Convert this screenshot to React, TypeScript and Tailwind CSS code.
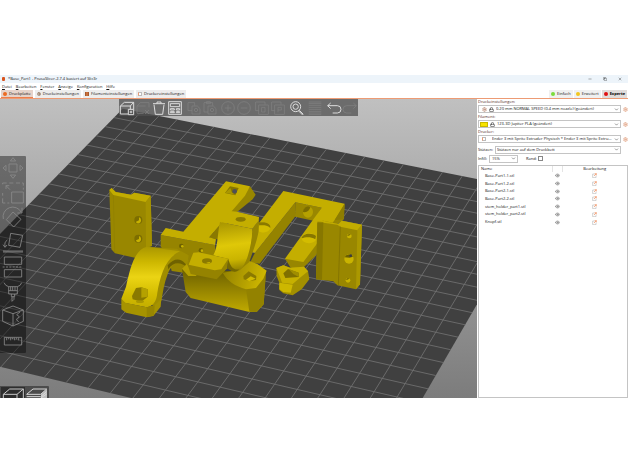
import React, { useState } from 'react';
import { ChevronDown, Copy, Eye, Lock, Minus, Settings, X } from 'lucide-react';

const menuItems = ['Datei', 'Bearbeiten', 'Fenster', 'Anzeige', 'Konfiguration', 'Hilfe'];

const objects = [
  'Base-Part1-1.stl',
  'Base-Part1-2.stl',
  'Base-Part2-1.stl',
  'Base-Part2-2.stl',
  'stem_holder_part1.stl',
  'stem_holder_part2.stl',
  'Knopf.stl'
];

const modes = [
  { name: 'Einfach', dot: 'bg-[#7bdc3c]' },
  { name: 'Erweitert', dot: 'bg-[#f2c61d]' },
  { name: 'Experte', dot: 'bg-[#e01010]' }
];

// Projects the unit square onto the print bed as the camera sees it
const bed = { tl: [368, 38], tr: [1626, 288], br: [1162, 1089], bl: [-316, 737] };
const CELLS = 22;

const project = (u: number, v: number) => {
  const { tl, tr, br, bl } = bed;
  const dx1 = tr[0] - br[0];
  const dx2 = bl[0] - br[0];
  const dx3 = tl[0] - tr[0] + br[0] - bl[0];
  const dy1 = tr[1] - br[1];
  const dy2 = bl[1] - br[1];
  const dy3 = tl[1] - tr[1] + br[1] - bl[1];
  const det = dx1 * dy2 - dx2 * dy1;
  const g = (dx3 * dy2 - dx2 * dy3) / det;
  const h = (dx1 * dy3 - dx3 * dy1) / det;
  const w = g * u + h * v + 1;
  const x = ((tr[0] - tl[0] + g * tr[0]) * u + (bl[0] - tl[0] + h * bl[0]) * v + tl[0]) / w;
  const y = ((tr[1] - tl[1] + g * tr[1]) * u + (bl[1] - tl[1] + h * bl[1]) * v + tl[1]) / w;
  return `${x.toFixed(1)} ${y.toFixed(1)}`;
};

const gridPath = Array.from({ length: CELLS - 1 }, (_, i) => {
  const t = (i + 1) / CELLS;
  return `M${project(t, 0)}L${project(t, 1)}M${project(0, t)}L${project(1, t)}`;
}).join('');

const Scene = () => (
  <svg viewBox="0 9 1431 897" className="block w-full" role="img" aria-label="Druckbett">
    <defs>
      <linearGradient id="sky" x1="0" y1="0" x2="0" y2="1">
        <stop offset="0" stopColor="#c0c0c0" />
        <stop offset="1" stopColor="#7c7c7c" />
      </linearGradient>
      <linearGradient id="arch" x1="0" y1="0" x2="0" y2="1">
        <stop offset="0" stopColor="#aa9700" />
        <stop offset="0.25" stopColor="#cdb700" />
        <stop offset="0.5" stopColor="#ebd414" />
        <stop offset="0.8" stopColor="#d2bb00" />
        <stop offset="1" stopColor="#c4ae00" />
      </linearGradient>
      <linearGradient id="cradle" x1="0" y1="0" x2="0.1" y2="1">
        <stop offset="0" stopColor="#a59200" />
        <stop offset="0.5" stopColor="#dfc808" />
        <stop offset="0.8" stopColor="#cab400" />
        <stop offset="1" stopColor="#968500" />
      </linearGradient>
      <linearGradient id="base" x1="0" y1="0" x2="0" y2="1">
        <stop offset="0.1" stopColor="#6d6100" />
        <stop offset="0.6" stopColor="#9c8a00" />
        <stop offset="1" stopColor="#c0aa00" />
      </linearGradient>
      <linearGradient id="shelf" x1="0" y1="0" x2="1" y2="0.2">
        <stop offset="0" stopColor="#8f7e00" />
        <stop offset="1" stopColor="#cdb600" />
      </linearGradient>
    </defs>
    <rect y="9" width="1431" height="897" fill="url(#sky)" />
    <path d={`M${project(0, 0)}L${project(1, 0)}L${project(1, 1)}L${project(0, 1)}Z`} fill="#404040" />
    <path d={gridPath} stroke="#707070" strokeWidth="2.6" fill="none" />

    {/* left plate */}
    <path d="M328 282L335 276L347 288L393 296L403 290L452 299L456 450L438 456L408 486L345 472L334 460Z" fill="#998700" />
    <path d="M328 282L335 276L347 288L393 296L403 290L452 299L437 318L340 297Z" fill="#c2ac00" />
    <path d="M437 318L452 299L456 450L438 456Z" fill="#a59200" />
    <path d="M340 297L344 468" stroke="#8f7e00" strokeWidth="2" />
    <g fill="#7d6e00">
      <circle cx="415" cy="372" r="12" />
      <circle cx="415" cy="428" r="12" />
    </g>
    <g fill="#c7b100">
      <path d="M417 364a10 10 0 0 1 1 18q-10 2-10-5l9-4z" />
      <path d="M417 420a10 10 0 0 1 1 18q-10 2-10-5l9-4z" />
    </g>

    {/* bracket with the long arm */}
    <path d="M750 271L767 296L758 310L690 365L655 430L628 426Z" fill="#988600" />
    <path d="M482 417L645 447L650 500L550 520L482 452Z" fill="#968400" />
    <path d="M678 256L750 271L735 299L628 424L648 430L645 447L482 417L497 396L550 407Z" fill="#c4ae00" />
    <path d="M628 424L662 385L660 432Z" fill="#8a7900" />
    <path d="M690 271L716 276L706 298L675 291Z" fill="#857500" />
    <circle cx="704" cy="286" r="7" fill="#4f4f55" />
    <path d="M691 276L696 290L706 296L676 290Z" fill="#aa9700" />
    <g fill="#6f6200">
      <circle cx="544" cy="450" r="7" />
      <circle cx="603" cy="463" r="7" />
    </g>
    <g fill="#c7b100">
      <circle cx="547" cy="451" r="4" />
      <circle cx="606" cy="464" r="4" />
    </g>

    {/* U frame */}
    <path d="M886 319L885 362L779 503L750 500L765 470Z" fill="#958300" />
    <path d="M886 319L965 335L940 374L885 362Z" fill="#998700" />
    <path d="M1034 323L1030 372L990 400L946 480L905 520L872 515L855 488Z" fill="#988600" />
    <path d="M850 285L1034 323L1004 372L910 498L855 488L965 335L886 319L765 470L745 466L740 430Z" fill="#c4ae00" />
    <path d="M1034 323L1032 370L1004 372Z" fill="#8d7d00" />
    <ellipse cx="924" cy="348" rx="15" ry="17" fill="#b5a100" />
    <path d="M909 348a15 17 0 0 1 22-15q-4 18-22 15z" fill="#7c6d00" />
    <path d="M772 404L782 379C800 376 813 385 811 396C808 409 790 414 772 404Z" fill="#d3bc00" />
    <path d="M776 380C800 376 813 385 811 396C800 386 790 388 777 388Z" fill="#8a7900" />
    <ellipse cx="927" cy="427" rx="22" ry="15" fill="#d3bc00" />
    <path d="M905 427C905 412 936 408 948 420L946 430C930 420 915 424 905 427Z" fill="#867600" />

    {/* right plate */}
    <path d="M952 377L970 374L1015 384L1025 374L1086 386L1080 565L1068 580L1012 568L1000 556L948 550Z" fill="#998700" />
    <path d="M952 377L970 374L1015 384L1025 374L1086 386L1072 403L1021 392L1012 386L970 380Z" fill="#c2ac00" />
    <path d="M1072 403L1086 386L1080 565L1068 580Z" fill="#ab9800" />
    <path d="M952 380L970 379L966 551L948 550Z" fill="#877700" />
    <path d="M1021 392L1015 568" stroke="#857500" strokeWidth="3" />
    <circle cx="1048" cy="420" r="7" fill="#c9b300" />
    <circle cx="1044" cy="553" r="7" fill="#c9b300" />
    <circle cx="1047" cy="489" r="14" fill="#c9b300" />
    <path d="M1034 484a14 14 0 0 1 25-2l-10 3z" fill="#6b5f00" />
    <path d="M1042 420a7 7 0 0 1 11-4zM1038 552a7 7 0 0 1 11-4z" fill="#6b5f00" />
    <circle cx="1052" cy="479" r="4" fill="#3c3c40" />

    {/* half ring on the left */}
    <path d="M500 462L560 474L570 500L552 530L515 525Z" fill="#988600" />
    <path d="M440 452L530 458L566 478L562 505L545 498C528 496 510 512 503 535C492 562 489 590 484 615L462 632L455 625C468 590 474 520 505 484Z" fill="#9f8d00" />
    <path d="M505 520C520 495 545 498 562 515L556 503C540 485 522 486 503 508Z" fill="#6f6200" />
    <path d="M364 608L378 572C390 520 402 462 440 452L540 466C494 486 480 545 472 590C470 612 462 630 440 634L372 620Z" fill="url(#arch)" />
    <path d="M364 608L376 620L440 634L464 628L484 608L482 632L460 660L440 664L378 650L364 640Z" fill="#a69300" />
    <path d="M440 634L464 628L462 658L440 664Z" fill="#988600" />
    <path d="M396 600L408 576L424 574L443 580L443 602L424 617L398 610Z" fill="#8a7900" />
    <path d="M424 574L443 580L443 602L424 605Z" fill="#b5a100" />
    <ellipse cx="420" cy="617" rx="12" ry="4" fill="#aa9700" />

    {/* stem holder base */}
    <path d="M546 520L560 508L668 525L798 525L791 625L770 648L745 647L572 606L557 588Z" fill="url(#base)" />
    <path d="M738 578L768 576L798 525L791 625L770 648L748 647Z" fill="#938200" />
    <path d="M546 518L560 504L590 540L565 540Z" fill="#b5a000" />
    <path d="M748 495L772 504L800 524L790 548L768 576L738 580C705 570 682 555 668 530L700 525Z" fill="url(#shelf)" />
    <path d="M730 540L746 526L769 540L768 552L748 555L731 550Z" fill="#8a7900" />
    <path d="M738 551L752 541L767 548L748 556Z" fill="#d2bb00" />
    <path d="M777 372L776 405C770 440 757 470 748 498L715 526C738 500 754 450 757 398Z" fill="#968400" />
    <path d="M660 378L757 398C755 460 735 527 704 528C690 524 686 510 683 490L640 478C655 450 652 410 660 378Z" fill="url(#cradle)" />
    <path d="M690 345L711 347L777 363L776 374L757 398L660 378Z" fill="#c4ae00" />
    <ellipse cx="722" cy="370" rx="15" ry="7" fill="#8a7900" />
    <path d="M580 470L596 469L685 488L682 517L650 550L572 534L563 506Z" fill="#958300" />
    <path d="M580 470L596 469L685 488L664 520L644 523L566 506Z" fill="#c4ae00" />
    <path d="M685 488L682 517L690 522C700 530 712 528 718 520C700 524 690 510 685 488Z" fill="#756800" />
    <ellipse cx="621" cy="495" rx="15" ry="8" fill="#8a7900" />
    <path d="M618 501q10-4 14-2q-4 5-14 2z" fill="#c9b300" />

    {/* knob */}
    <path d="M829 516L850 508L870 515L912 512L924 525L928 550L905 580L878 598L850 592L838 582L838 560L830 540Z" fill="#a28f00" />
    <path d="M829 516L850 508L870 515L912 512L924 526L900 545L878 564L846 560L840 543Z" fill="#c6b000" />
    <path d="M838 560L878 566L872 590L850 588L838 580Z" fill="#cdb700" />
    <path d="M850 532L864 519L896 530L896 543L856 546Z" fill="#7f7000" />
    <path d="M866 519L896 530L896 543L880 534Z" fill="#a08e00" />
  </svg>
);

// Toolbar drawings share a 48 unit box
const toolGroups = [
  [
    { label: 'Hinzufügen', on: true, d: 'M4 18L16 7H44L34 18ZM4 18V42H28M34 18V28M44 7V28M28 28H44V44H28ZM32 36H40M36 32V40' },
    { label: 'Entfernen', on: false, d: 'M6 18L16 8H42V22M6 18H32M6 18V40H26M30 30L42 42M42 30L30 42' },
    { label: 'Alle entfernen', on: true, d: 'M6 11H42M18 11V6H30V11M9 14L13 43H35L39 14' },
    { label: 'Anordnen', on: true, d: 'M5 5H43V43H5ZM10 11H38V20H10ZM10 26H22V30H10ZM10 35H22V38H10ZM28 26H38V30H28ZM28 35H38V38H28Z' }
  ],
  [
    { label: 'Kopieren', on: false, d: 'M26 17V8H6V32H18M18 18H34L42 26V42H18ZM25 30a5 5 0 1 0 10 0a5 5 0 1 0-10 0' },
    { label: 'Einfügen', on: false, d: 'M32 17V8H6V36H18M13 5H25V11H13ZM18 18H34L42 26V42H18ZM25 30a5 5 0 1 0 10 0a5 5 0 1 0-10 0' }
  ],
  [
    { label: 'Kopie hinzufügen', on: false, d: 'M5 24a19 19 0 1 0 38 0a19 19 0 1 0-38 0M14 24H34M24 14V34' },
    { label: 'Kopie entfernen', on: false, d: 'M5 24a19 19 0 1 0 38 0a19 19 0 1 0-38 0M14 24H34' }
  ],
  [
    { label: 'In Objekte trennen', on: false, d: 'M14 32H5V6H33V14M14 15H43V43H14ZM23 22H33V36H23Z' },
    { label: 'In Teile trennen', on: false, d: 'M14 32H5V6H33V14M14 15H43V43H14ZM24 37V22H34V30H24' }
  ],
  [{ label: 'Suchen', on: true, d: 'M5 20a15 15 0 1 0 30 0a15 15 0 1 0-30 0M12 20a8 8 0 1 0 16 0a8 8 0 1 0-16 0M31 31L43 43M29 33L41 45' }],
  [{ label: 'Variable Schichthöhe', on: false, d: 'M5 6H43M5 11H43M5 16H43M5 22H43M5 28H43M5 34H43M5 39H43M5 43H43' }],
  [
    { label: 'Rückgängig', on: true, d: 'M14 9L5 17L14 26M5 17H34a11 11 0 0 1 0 22H20' },
    { label: 'Wiederholen', on: false, d: 'M34 9L43 17L34 26M43 17H14a11 11 0 0 0 0 22H28' }
  ]
];

const gizmos = [
  { label: 'Bewegen', d: 'M27 24H51V48H27ZM31 15L39 5L47 15ZM31 57L39 67L47 57ZM18 28L9 36L18 44ZM60 28L69 36L60 44Z' },
  { label: 'Skalieren', d: 'M35 33H70V66H35ZM8 6H20M28 6H40M48 6H60M66 6H70V14M70 20V26M8 6V10M8 36V44M8 52V66H16M22 66H28M18 14L30 26M18 24V14H28' },
  { label: 'Drehen', d: 'M39 21L63 43L41 66L19 44ZM10 42A29 29 0 0 1 64 22M66 8V24H52' },
  { label: 'Auf Fläche legen', d: 'M32 10L68 16L60 52L26 46ZM9 63H69M9 66H69M22 30C14 36 14 40 15 50M9 44L15 52L21 45' },
  { label: 'Schneiden', d: 'M13 6H65V28H13ZM13 44H65V66H13ZM8 36H14M18 36H24M28 36H34M38 36H44M48 36H54M58 36H64' },
  { label: 'Stützen aufmalen', d: 'M12 8Q16 18 26 20H52Q62 18 65 8M26 20V42H52V20M26 32H52M34 42V50H44V42M36 50V64L42 58V50M32 20V32M38 20V32M45 20V32' },
  { label: 'Naht aufmalen', d: 'M39 6L70 18V52L39 66L8 52V18ZM8 18L39 29L70 18M39 29V66M60 24L50 32L58 38L49 46L56 54' },
  { label: 'Messen', d: 'M13 25H65V48H13ZM20 26V34M26 26V31M32 26V34M38 26V31M44 26V34M50 26V31M56 26V34' }
];

const Field = ({ id, label, value, children }: { id: string; label: string; value: string; children: React.ReactNode }) => (
  <div className="h-[15px]">
    <label htmlFor={id} className="block h-[6px] text-[#4d2518]">
      {label}
    </label>
    <div className="flex items-center gap-[2px]">
      <div className="flex h-2 min-w-0 flex-1 items-center gap-[2px] border border-[#c4c4c4] bg-white pl-[3px]">
        {children}
        <select id={id} className="h-[6px] min-w-0 flex-1 appearance-none truncate bg-transparent leading-[6px]">
          <option>{value}</option>
        </select>
        <ChevronDown className="mr-px size-[5px] shrink-0" />
      </div>
      <button aria-label={`${label} bearbeiten`}>
        <Settings className="size-[5px] text-[#e5a98c]" strokeWidth={4} />
      </button>
    </div>
  </div>
);

const tabs = [
  { name: 'Druckplatte', icon: <span className="size-[4px] rounded-full bg-[#ed6b21]" /> },
  { name: 'Druckeinstellungen', icon: <Settings className="size-[4px] text-[#8a6a50]" strokeWidth={4} /> },
  { name: 'Filamenteinstellungen', icon: <span className="size-[4px] border-x border-[#a65a30] bg-[#c8703c]" /> },
  { name: 'Druckereinstellungen', icon: <span className="size-[4px] border border-[#bbb] border-l-[#ed9b74] bg-white" /> }
];

export default function App() {
  const [tab, setTab] = useState('Druckplatte');
  const [mode, setMode] = useState('Experte');
  const [brim, setBrim] = useState(false);

  return (
    <div className="min-h-screen bg-white pt-[75px] font-['Open_Sans','Noto_Sans',sans-serif] text-[4px] leading-[6px] text-[#111]">
      <header>
        <div className="flex h-2 items-center bg-[#edf4fa] pl-[2px] pr-[6px]">
          <span className="h-[4px] w-[3px] rounded-[1px] bg-[#d9541e]" />
          <h1 className="ml-[3px] flex-1">*Base_Part1 - PrusaSlicer-2.7.4 basiert auf Slic3r</h1>
          <div className="flex gap-[11px]">
            <button aria-label="Minimieren"><Minus className="size-[4px]" /></button>
            <button aria-label="Verkleinern"><Copy className="size-[4px]" /></button>
            <button aria-label="Schließen"><X className="size-[4px]" /></button>
          </div>
        </div>
        <nav className="flex h-[7px] gap-[4px] pl-[2px]">
          {menuItems.map((item) => (
            <button key={item} className="first-letter:underline">{item}</button>
          ))}
        </nav>
        <div className="flex h-[9px] items-stretch justify-between border-b border-[#ed9b74] pl-px">
          <div className="flex gap-[2px]">
            {tabs.map(({ name, icon }) => (
              <button
                key={name}
                onClick={() => setTab(name)}
                className={`flex items-center gap-[2px] px-[2px] ${tab === name ? 'border-b border-[#ed7f4c] bg-[#e6d3ca]' : 'bg-[#ededed]'}`}
              >
                {icon}
                {name}
              </button>
            ))}
          </div>
          <div className="flex gap-px pr-px">
            {modes.map(({ name, dot }) => (
              <button
                key={name}
                onClick={() => setMode(name)}
                className={`flex items-center gap-[2px] px-[2px] ${mode === name ? 'bg-[#e0dcda] font-bold text-black' : 'bg-[#f0f0f0]'}`}
              >
                <span className={`size-[4px] rounded-full ${dot}`} />
                {name}
              </button>
            ))}
          </div>
        </div>
      </header>

      <main className="grid grid-cols-[minmax(0,1fr)_151px]">
        <section className="relative overflow-hidden">
          <Scene />
          <div className="absolute left-1/4 top-0 flex h-[17px] w-1/2 items-center justify-between bg-[#505050]/75">
            {toolGroups.map((group) => (
              <div key={group[0].label} className="flex">
                {group.map(({ label, on, d }) => (
                  <button key={label} aria-label={label} className={on ? 'text-[#dcdcdc]' : 'text-[#848484]'}>
                    <svg viewBox="0 0 48 48" className="size-4" fill="none" stroke="currentColor" strokeWidth={on ? 3 : 2}>
                      <path d={d} />
                    </svg>
                  </button>
                ))}
              </div>
            ))}
          </div>
          <div className="absolute left-0 top-[57px] flex h-[197px] w-[26px] flex-col justify-between rounded-r-[1px] bg-black/40 text-[#8a8a8a]">
            {gizmos.map(({ label, d }) => (
              <button key={label} aria-label={label}>
                <svg viewBox="0 0 78 72" className="block w-full" fill="none" stroke="currentColor" strokeWidth="2.5">
                  <path d={d} />
                </svg>
              </button>
            ))}
          </div>
          <div className="absolute bottom-0 left-0 flex h-3 w-[49px] rounded-tr-[1px] bg-black/40 pl-px pt-px">
            <button aria-label="3D-Ansicht" className="bg-black/40">
              <svg viewBox="0 0 72 33" className="h-[11px] w-6" fill="none" stroke="#c8c8c8" strokeWidth="3">
                <path d="M7 22L26 6H67L48 22ZM7 22V33M48 22V33M67 6V33" />
              </svg>
            </button>
            <button aria-label="Vorschau">
              <svg viewBox="0 0 72 33" className="h-[11px] w-6" fill="none" stroke="#d8d8d8" strokeWidth="3">
                <path d="M48 22L66 6V33H48Z" fill="#bdbdbd" stroke="none" />
                <path d="M5 22L24 6H65L47 22ZM5 29H47L65 14M47 33L65 21" />
              </svg>
            </button>
          </div>
        </section>

        <aside className="flex flex-col bg-white pl-px">
          <Field id="print" label="Druckeinstellungen:" value="0.20 mm NORMAL SPEED (0.4 mm nozzle) (geändert)">
            <Settings className="size-[5px] shrink-0 text-[#b5806a]" strokeWidth={3} />
            <Lock className="size-[5px] shrink-0 text-[#444]" strokeWidth={3} />
          </Field>
          <Field id="filament" label="Filament:" value="123-3D Jupiter PLA (geändert)">
            <span className="-ml-[2px] h-[5px] w-2 shrink-0 border border-[#c9b800] bg-[#f8e300]" />
            <Lock className="size-[5px] shrink-0 text-[#444]" strokeWidth={3} />
          </Field>
          <Field id="printer" label="Drucker:" value="Ender 3 mit Sprite Extruder Physisch * Ender 3 mit Sprite Extruder">
            <span className="mr-[4px] size-[4px] shrink-0 border border-[#bbb] border-l-[#ed9b74] bg-white" />
          </Field>
          <div className="mt-px flex h-[9px] items-center pr-[7px]">
            <label htmlFor="supports" className="w-[17px]">Stützen:</label>
            <div className="flex h-2 min-w-0 flex-1 items-center border border-[#c4c4c4] pl-px">
              <select id="supports" className="h-[6px] min-w-0 flex-1 appearance-none bg-transparent leading-[6px]">
                <option>Stützen nur auf dem Druckbett</option>
              </select>
              <ChevronDown className="mr-px size-[5px] shrink-0" />
            </div>
          </div>
          <div className="flex h-[9px] items-center">
            <label htmlFor="infill" className="w-[11px]">Infill:</label>
            <div className="flex h-2 w-[29px] items-center border border-[#c4c4c4] pl-[2px]">
              <select id="infill" className="h-[6px] min-w-0 flex-1 appearance-none bg-transparent leading-[6px]">
                <option>15%</option>
              </select>
              <ChevronDown className="mr-px size-[5px] shrink-0" />
            </div>
            <label htmlFor="brim" className="ml-2">Rand:</label>
            <input
              id="brim"
              type="checkbox"
              checked={brim}
              onChange={(e) => setBrim(e.target.checked)}
              className="ml-px size-[5px] appearance-none border border-[#888] checked:bg-[#ed6b21]"
            />
          </div>
          <div className="mt-[2px] flex-1 border border-[#c4c4c4]">
            <table className="h-[60px] w-full table-fixed">
              <thead>
                <tr>
                  <th className="border-r border-[#e4e4e4] pl-[2px] text-left font-normal">Name</th>
                  <th className="w-[10px] border-r border-[#e4e4e4]" aria-label="Sichtbar" />
                  <th className="w-[65px] font-normal">Bearbeitung</th>
                </tr>
              </thead>
              <tbody>
                {objects.map((name) => (
                  <tr key={name}>
                    <td className="pl-[6px]">{name}</td>
                    <td>
                      <Eye className="mx-auto size-[5px] text-[#777]" strokeWidth={3} />
                    </td>
                    <td>
                      <svg viewBox="0 0 15 15" className="mx-auto size-[5px]" fill="none" strokeWidth="2">
                        <path d="M8 3H2V14H12V8" stroke="#bbb" />
                        <path d="M6 9L13 2M8 2H13V7" stroke="#ee8a58" strokeWidth="2" />
                      </svg>
                    </td>
                  </tr>
                ))}
              </tbody>
            </table>
          </div>
        </aside>
      </main>
    </div>
  );
}
